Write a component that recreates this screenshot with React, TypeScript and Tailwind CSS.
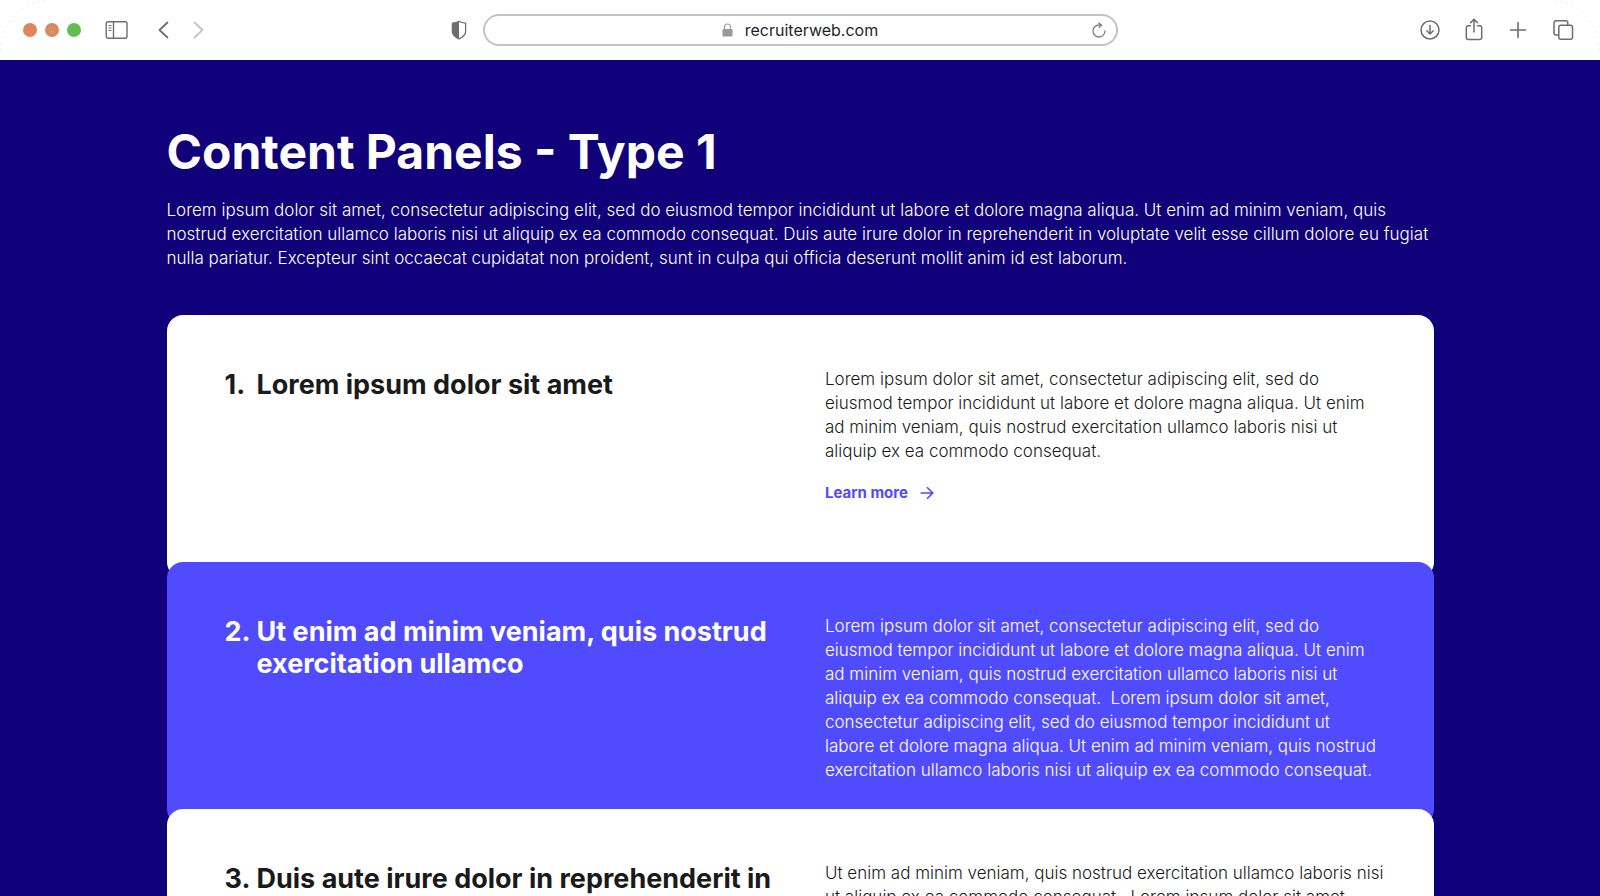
import type { ReactNode } from "react";
import { clsx } from "clsx";

const LOREM_SHORT =
  "Lorem ipsum dolor sit amet, consectetur adipiscing elit, sed do eiusmod tempor incididunt ut labore et dolore magna aliqua. Ut enim ad minim veniam, quis nostrud exercitation ullamco laboris nisi ut aliquip ex ea commodo consequat.";

type Panel = {
  title: string;
  body: string;
  tone: "light" | "accent";
  link?: string;
};

const panels: Panel[] = [
  {
    title: "Lorem ipsum dolor sit amet",
    body: LOREM_SHORT,
    tone: "light",
    link: "Learn more",
  },
  {
    title: "Ut enim ad minim veniam, quis nostrud exercitation ullamco",
    body: `${LOREM_SHORT}\u00a0 ${LOREM_SHORT}`,
    tone: "accent",
  },
  {
    title: "Duis aute irure dolor in reprehenderit in",
    body: "Ut enim ad minim veniam, quis nostrud exercitation ullamco laboris nisi ut aliquip ex ea commodo consequat.\u00a0 Lorem ipsum dolor sit amet,",
    tone: "light",
  },
];

function ToolButton({ label, children }: { label: string; children: ReactNode }) {
  return (
    <button type="button" aria-label={label} className="shrink-0">
      {children}
    </button>
  );
}

function CornerArc({ className }: { className: string }) {
  return (
    <svg
      className={clsx("pointer-events-none absolute top-0", className)}
      width="50"
      height="50"
      viewBox="0 0 50 50"
      fill="none"
      stroke="#d9d9e2"
      strokeDasharray="1 5"
      aria-hidden="true"
    >
      <path d="M.5 50C.5 22 22 .5 50 .5" />
    </svg>
  );
}

function BrowserBar() {
  return (
    <header className="relative flex h-15 shrink-0 items-center bg-white text-[#6e6e6e]">
      <CornerArc className="left-0" />
      <CornerArc className="right-0 -scale-x-100" />

      <div className="flex flex-1 items-center pr-4 pl-[23px]">
        <div className="flex gap-2">
          <span className="size-3.5 rounded-full bg-[#dd875b]" />
          <svg width="14" height="14" viewBox="0 0 14 14" aria-hidden="true">
            <circle cx="7" cy="7" r="7" fill="#dd875b" />
            <g stroke="#c9a48e" strokeWidth="1" strokeDasharray="1 1.4">
              <path d="M4.8 3.9h5M3.6 5.6h7M3.6 7.3h7M3.6 9h7M4.8 10.6h5" />
            </g>
          </svg>
          <span className="size-3.5 rounded-full bg-[#61bd4f]" />
        </div>
        <div className="ml-6 flex items-center">
          <ToolButton label="Show sidebar">
            <svg width="24" height="20" viewBox="0 0 24 20" fill="none" stroke="currentColor" strokeWidth="1.4">
              <rect x="1.2" y="1.7" width="20.8" height="16.6" rx="2" />
              <path d="M8.5 2v16" />
              <path d="M3.5 5.5h3M3.5 8h3M3.5 10.5h3" strokeWidth="1" />
            </svg>
          </ToolButton>
          <div className="ml-[26px] flex gap-5">
            <ToolButton label="Back">
              <svg width="16" height="20" viewBox="0 0 16 20" fill="none" stroke="currentColor" strokeWidth="1.8" strokeLinecap="round" strokeLinejoin="round">
                <path d="M12.5 2.5 4.5 10l8 7.5" />
              </svg>
            </ToolButton>
            <ToolButton label="Forward">
              <svg width="16" height="20" viewBox="0 0 16 20" fill="none" stroke="#c2c2c8" strokeWidth="1.8" strokeLinecap="round" strokeLinejoin="round">
                <path d="m3.5 2.5 8 7.5-8 7.5" />
              </svg>
            </ToolButton>
          </div>
        </div>
        <div className="ml-auto flex">
          <ToolButton label="Privacy report">
            <svg width="16" height="20" viewBox="0 0 16 20" fill="none">
              <path d="M8 1.2c2.2 1.4 4.5 1.8 6.6 2v8.3c0 3-3 5.6-6.6 7.3-3.6-1.7-6.6-4.3-6.6-7.3V3.2c2.1-.2 4.4-.6 6.6-2Z" stroke="currentColor" strokeWidth="1.3" strokeLinejoin="round" />
              <path d="M8 1.2c-2.2 1.4-4.5 1.8-6.6 2v8.3c0 3 3 5.6 6.6 7.3Z" fill="currentColor" />
            </svg>
          </ToolButton>
        </div>
      </div>

      <div className="flex h-8 w-[635px] items-center rounded-full border-2 border-[#c3c3c6] pr-2.5">
        <div className="flex flex-1 items-center justify-center gap-3 pl-6">
          <svg width="11" height="14" viewBox="0 0 11 14" fill="none" aria-hidden="true">
            <rect x=".5" y="6" width="10" height="7.6" rx="1.3" fill="#999" />
            <path d="M2.5 6.5V4a3 3 0 0 1 6 0v2.5" stroke="#999" strokeWidth="1.1" />
          </svg>
          <span className="text-base text-[#1f1f1f]">recruiterweb.com</span>
        </div>
        <ToolButton label="Reload">
          <svg width="14" height="16" viewBox="0 0 14 16" fill="none" stroke="#808080" strokeWidth="1.3" strokeLinecap="round" strokeLinejoin="round">
            <path d="M13 8.8A6 6 0 1 1 7 3h2.3" />
            <path d="M6.8.9 9.4 3 7.2 5.5" />
          </svg>
        </ToolButton>
      </div>

      <div className="flex flex-1 items-center justify-end gap-6 pr-[26px] pl-[13px]">
        <ToolButton label="Downloads">
          <svg width="20" height="20" viewBox="0 0 20 20" fill="none" stroke="currentColor" strokeWidth="1.5" strokeLinecap="round" strokeLinejoin="round">
            <circle cx="10" cy="10" r="9" />
            <path d="M10 5.5v8.3M6.8 10.8l3.2 3.2 3.2-3.2" />
          </svg>
        </ToolButton>
        <ToolButton label="Share">
          <svg width="20" height="24" viewBox="0 0 20 24" fill="none" stroke="currentColor" strokeWidth="1.5" strokeLinecap="round" strokeLinejoin="round">
            <path d="M6.5 7.8H4.3a2 2 0 0 0-2 2v9.7a2 2 0 0 0 2 2h11.4a2 2 0 0 0 2-2V9.800a2 2 0 0 0-2-2h-2.200" />
            <path d="M10 14V1.500M6.700 4.600 10 1.300l3.300 3.300" />
          </svg>
        </ToolButton>
        <ToolButton label="New tab">
          <svg width="20" height="20" viewBox="0 0 20 20" fill="none" stroke="currentColor" strokeWidth="1.6" strokeLinecap="round">
            <path d="M10 2.500v15M2.500 10h15" />
          </svg>
        </ToolButton>
        <ToolButton label="Tab overview">
          <svg width="22" height="22" viewBox="0 0 22 22" fill="none" stroke="currentColor" strokeWidth="1.5" strokeLinejoin="round">
            <rect x="6.8" y="6.3" width="13.7" height="14" rx="2" />
            <path d="M6.500 16H4a2 2 0 0 1-2-2V3.800a2 2 0 0 1 2-2h9.800a2 2 0 0 1 2 2v2.300" />
          </svg>
        </ToolButton>
      </div>
    </header>
  );
}

function ContentPanel({ panel, index }: { panel: Panel; index: number }) {
  const accent = panel.tone === "accent";
  return (
    <li
      className={clsx(
        "relative grid min-h-[263px] grid-cols-2 gap-[42px] rounded-2xl pt-[52px] pr-[50px] pb-10 pl-[58px]",
        index > 0 && "-mt-4",
        accent ? "bg-[#514bff] text-white" : "bg-white text-[#1a1a1a]"
      )}
    >
      <h2 className="mt-0.5 flex text-[27px] leading-8 font-bold">
        <span className="w-8 shrink-0">{index + 1}.</span>
        <span>{panel.title}</span>
      </h2>
      <div>
        <p className="text-[17px] leading-6 font-light">{panel.body}</p>
        {panel.link && (
          <a
            href="#learn-more"
            className="mt-[18px] inline-flex items-center gap-3 text-[15px] leading-6 font-bold text-[#514bff]"
          >
            {panel.link}
            <svg width="14" height="14" viewBox="0 0 14 14" fill="none" stroke="currentColor" strokeWidth="1.6" aria-hidden="true">
              <path d="M.5 7h12M7 1.200 12.800 7 7 12.800" />
            </svg>
          </a>
        )}
      </div>
    </li>
  );
}

export default function App() {
  return (
    <div className="flex h-screen flex-col bg-[#10007a] font-['Inter','Liberation_Sans',sans-serif]">
      <BrowserBar />
      <main className="min-h-0 flex-1 overflow-y-auto [scrollbar-width:none]">
        <div className="mx-auto max-w-[1267px] pt-16">
          <h1 className="text-5xl leading-14 font-bold text-white">Content Panels - Type 1</h1>
          <p className="mt-[18px] text-[17px] leading-6 font-light text-white">
            Lorem ipsum dolor sit amet, consectetur adipiscing elit, sed do eiusmod tempor incididunt
            ut labore et dolore magna aliqua. Ut enim ad minim veniam, quis nostrud exercitation
            ullamco laboris nisi ut aliquip ex ea commodo consequat. Duis aute irure dolor in
            reprehenderit in voluptate velit esse cillum dolore eu fugiat nulla pariatur. Excepteur
            sint occaecat cupidatat non proident, sunt in culpa qui officia deserunt mollit anim id
            est laborum.
          </p>
          <ol className="mt-[45px]">
            {panels.map((panel, i) => (
              <ContentPanel key={panel.title} panel={panel} index={i} />
            ))}
          </ol>
        </div>
      </main>
    </div>
  );
}
